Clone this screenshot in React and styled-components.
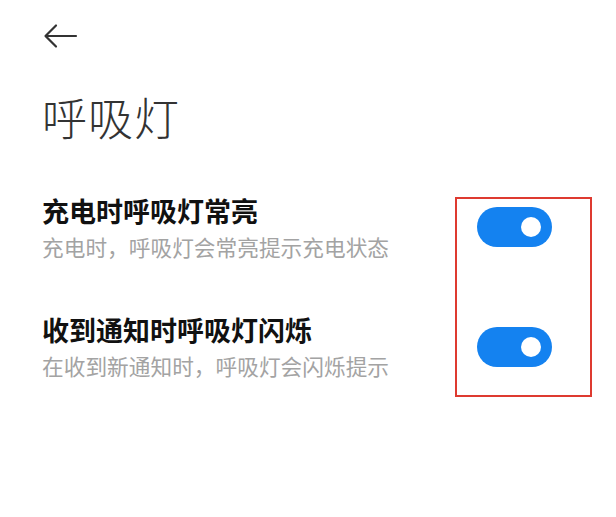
import React, { useState } from 'react';
import styled, { createGlobalStyle } from 'styled-components';

const GlobalStyle = createGlobalStyle`
  html, body {
    margin: 0;
    padding: 0;
    background: #ffffff;
  }
  body {
    font-family: "Noto Sans CJK SC", "Noto Sans", sans-serif;
    color: #222;
  }
`;

const Page = styled.div`
  width: 616px;
  height: 517px;
  background: #ffffff;
  box-sizing: border-box;
  padding: 22px 0 0 42px;
`;

const BackButton = styled.button`
  display: block;
  width: 36px;
  height: 28px;
  padding: 0;
  margin: 0;
  border: none;
  background: transparent;
  cursor: pointer;
`;

const PageTitle = styled.h1`
  margin: 37px 0 0;
  font-size: 45px;
  line-height: 60px;
  font-weight: 300;
  color: #333;
  letter-spacing: 1px;
`;

const Settings = styled.div`
  display: flex;
  align-items: flex-start;
  margin-top: 47px;
`;

const TextColumn = styled.div`
  display: flex;
  flex-direction: column;
  gap: 51px;
  width: 413px;
`;

const Item = styled.div`
  display: flex;
  flex-direction: column;
  gap: 4px;
`;

const ItemTitle = styled.div`
  font-size: 27px;
  line-height: 34px;
  font-weight: 700;
  color: #111;
`;

const ItemHint = styled.div`
  font-size: 21.7px;
  line-height: 30px;
  color: #a3a3a3;
`;

const SwitchColumn = styled.div`
  display: flex;
  flex-direction: column;
  gap: 80px;
  width: 137px;
  height: 200px;
  box-sizing: border-box;
  border: 2px solid #de3a30;
  padding: 8px 0 0 20px;
  margin-top: 3px;
`;

const Track = styled.button`
  position: relative;
  width: 75px;
  height: 40px;
  padding: 0;
  border: none;
  border-radius: 20px;
  background: ${p => (p.$on ? '#1482f0' : '#d9d9d9')};
  cursor: pointer;
`;

const Knob = styled.span`
  position: absolute;
  top: 10px;
  left: ${p => (p.$on ? '44px' : '11px')};
  width: 20px;
  height: 20px;
  border-radius: 50%;
  background: #ffffff;
`;

const Switch = ({ on, onToggle }) => (
  <Track $on={on} onClick={onToggle} aria-pressed={on}>
    <Knob $on={on} />
  </Track>
);

const items = [
  { title: '充电时呼吸灯常亮', hint: '充电时，呼吸灯会常亮提示充电状态' },
  { title: '收到通知时呼吸灯闪烁', hint: '在收到新通知时，呼吸灯会闪烁提示' },
];

export default function App() {
  const [states, setStates] = useState([true, true]);

  const toggle = i => setStates(s => s.map((v, j) => (j === i ? !v : v)));

  return (
    <>
      <GlobalStyle />
      <Page>
        <BackButton aria-label="返回">
          <svg width="36" height="28" viewBox="0 0 36 28" fill="none">
            <path
              d="M34 14H4M14 3.5L3.5 14L14 24.5"
              stroke="#333"
              strokeWidth="2.2"
              strokeLinecap="round"
              strokeLinejoin="round"
            />
          </svg>
        </BackButton>
        <PageTitle>呼吸灯</PageTitle>
        <Settings>
          <TextColumn>
            {items.map(item => (
              <Item key={item.title}>
                <ItemTitle>{item.title}</ItemTitle>
                <ItemHint>{item.hint}</ItemHint>
              </Item>
            ))}
          </TextColumn>
          <SwitchColumn>
            {states.map((on, i) => (
              <Switch key={i} on={on} onToggle={() => toggle(i)} />
            ))}
          </SwitchColumn>
        </Settings>
      </Page>
    </>
  );
}
